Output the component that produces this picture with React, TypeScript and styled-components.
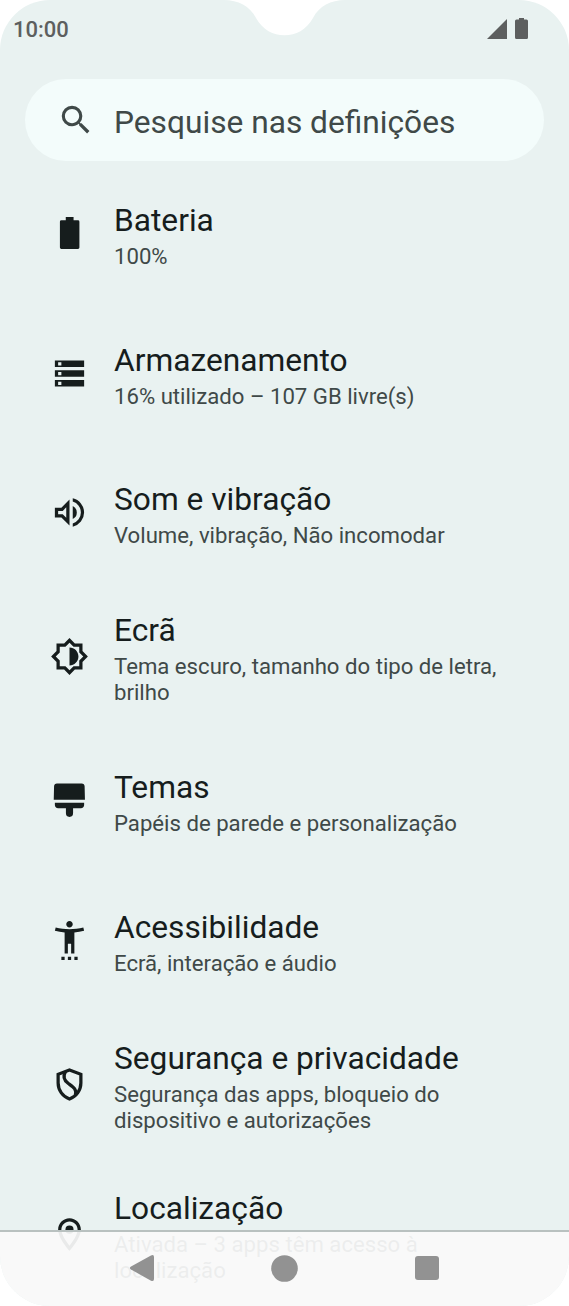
import React from 'react';
import styled, { createGlobalStyle } from 'styled-components';

const theme = {
  colors: {
    page: '#ffffff',
    screen: '#e9f2f1',
    search: '#f3fcfb',
    title: '#161d1d',
    text: '#3f4948',
    status: '#5d5f5f',
    nav: '#929292',
  },
  font: "Roboto, 'Liberation Sans', sans-serif",
};

const GlobalStyle = createGlobalStyle`
  * {
    box-sizing: border-box;
  }

  body {
    margin: 0;
    background: ${theme.colors.page};
    font-family: ${theme.font};
  }
`;

const Screen = styled.div`
  position: relative;
  width: 569px;
  height: 1306px;
  overflow: hidden;
  border-radius: 50px;
  background: ${theme.colors.screen};
`;

const Notch = styled.svg`
  position: absolute;
  top: 0;
  left: 224px;
`;

const StatusBar = styled.header`
  display: flex;
  align-items: center;
  justify-content: space-between;
  height: 59px;
  padding: 0 41px 0 13px;
  color: ${theme.colors.status};
`;

const Clock = styled.span`
  font-size: 22px;
  font-weight: 500;
  line-height: 26px;
`;

const StatusIcons = styled.div`
  display: flex;
  align-items: center;
  gap: 8px;
  padding-bottom: 2px;

  svg {
    display: block;
  }
`;

const SearchBar = styled.div`
  display: flex;
  align-items: center;
  height: 82px;
  margin: 20px 25px 0;
  padding-left: 32px;
  border-radius: 41px;
  background: ${theme.colors.search};
  color: ${theme.colors.text};
`;

const SearchIcon = styled.svg`
  width: 38px;
  height: 38px;
  margin: 0 19px 1px 0;
`;

const SearchText = styled.span`
  font-size: 31.7px;
  line-height: 38px;
  padding-top: 5px;
`;

const List = styled.main`
  padding-top: 3px;
`;

const Row = styled.section<{ $height: number }>`
  display: flex;
  align-items: center;
  height: ${({ $height }) => $height}px;
  padding: 0 50px;
`;

const RowIcon = styled.svg`
  flex: none;
  width: 39px;
  height: 39px;
  margin-right: 25px;
  color: ${theme.colors.title};
`;

const RowText = styled.div`
  padding-top: 1.2px;
`;

const RowTitle = styled.div`
  color: ${theme.colors.title};
  font-size: 31.7px;
  line-height: 44px;
`;

const RowSummary = styled.div`
  color: ${theme.colors.text};
  font-size: 22.17px;
  line-height: 26px;
  white-space: pre-line;
`;

const NavBar = styled.nav`
  position: absolute;
  bottom: 0;
  left: 0;
  display: flex;
  align-items: center;
  justify-content: space-between;
  width: 100%;
  height: 76px;
  padding: 0 130px 2px;
  border-top: 2px solid #b9c1c0;
  background: rgba(250, 250, 250, 0.93);
  background-clip: padding-box;
  color: ${theme.colors.nav};
`;

interface SettingItem {
  title: string;
  summary: string;
  height: number;
  icon: React.ReactNode;
}

const items: SettingItem[] = [
  {
    title: 'Bateria',
    summary: '100%',
    height: 139.4,
    icon: (
      <path d="M9.7 1.8h4.800v2.100h2.700q.9 0 .9.9v15.800q0 .9-.9.9H7q-.9 0-.9-.9V4.800q0-.9.9-.9h2.700z" />
    ),
  },
  {
    title: 'Armazenamento',
    summary: '16% utilizado – 107 GB livre(s)',
    height: 139.4,
    icon: (
      <path d="M3 20h18v-4H3v4zm2-3h2v2H5v-2zM3 4v4h18V4H3zm4 3H5V5h2v2zm-4 7h18v-4H3v4zm2-3h2v2H5v-2z" />
    ),
  },
  {
    title: 'Som e vibração',
    summary: 'Volume, vibração, Não incomodar',
    height: 139.4,
    icon: (
      <path d="M3 9v6h4l5 5V4L7 9H3zm7-.17v6.34L7.83 13H5v-2h2.83L10 8.83zM16.5 12A4.5 4.5 0 0 0 14 7.97v8.05A4.47 4.47 0 0 0 16.5 12zM14 3.23v2.06a7 7 0 0 1 0 13.42v2.06a9 9 0 0 0 0-17.54z" />
    ),
  },
  {
    title: 'Ecrã',
    summary: 'Tema escuro, tamanho do tipo de letra,\nbrilho',
    height: 148.8,
    icon: (
      <path d="M20 15.31L23.31 12 20 8.69V4h-4.69L12 .69 8.69 4H4v4.69L.69 12 4 15.31V20h4.69L12 23.31 15.31 20H20v-4.69zm-2-.83V18h-3.52L12 20.48 9.52 18H6v-3.52L3.52 12 6 9.52V6h3.52L12 3.52 14.48 6H18v3.52L20.48 12 18 14.48zM12 6.5v11c3.03 0 5.5-2.47 5.5-5.5S15.03 6.5 12 6.5z" />
    ),
  },
  {
    title: 'Temas',
    summary: 'Papéis de parede e personalização',
    height: 139.4,
    icon: (
      <path d="M4.300 1.500h15.200c1.100 0 1.800.7 1.800 1.800l.2 8.200H2.300l.2-8.200c0-1.100.7-1.800 1.800-1.800zM3 13.400h18v1.300c0 1.200-.8 2-2 2h-4.800v3.200a2.200 2.200 0 0 1-4.400 0v-3.200H5c-1.200 0-2-.8-2-2v-1.300z" />
    ),
  },
  {
    title: 'Acessibilidade',
    summary: 'Ecrã, interação e áudio',
    height: 139.4,
    icon: (
      <path d="M20.5 4c-2.61.7-5.67 1-8.5 1s-5.89-.3-8.5-1L3 6c1.86.5 4 .83 6 1v13h2v-6h2v6h2V7c2-.17 4.14-.5 6-1l-.5-2zM12 4c1.1 0 2-.9 2-2s-.9-2-2-2-2 .9-2 2 .9 2 2 2zM7 24h2v-2H7v2zm4 0h2v-2h-2v2zm4 0h2v-2h-2v2z" />
    ),
  },
  {
    title: 'Segurança e privacidade',
    summary: 'Segurança das apps, bloqueio do\ndispositivo e autorizações',
    height: 148.8,
    icon: (
      <g fill="none" stroke="currentColor" strokeWidth="2">
        <path d="M12 3.1l7 2.6v5.4c0 4.400-2.900 8.400-7 9.800-4.100-1.400-7-5.400-7-9.800V5.700l7-2.600z" />
        <path d="M9.600 4c-1.800 3-1.300 5.200 1.700 7.400 3.300 2.400 5.300 3.600 4.300 7.200" />
      </g>
    ),
  },
  {
    title: 'Localização',
    summary: 'Ativada – 3 apps têm acesso à\nlocalização',
    height: 151.8,
    icon: (
      <>
        <path d="M12 2C8.13 2 5 5.13 5 9c0 5.25 7 13 7 13s7-7.75 7-13c0-3.87-3.13-7-7-7zM7 9c0-2.76 2.24-5 5-5s5 2.24 5 5c0 2.88-2.88 7.19-5 9.88C9.92 16.21 7 11.85 7 9z" />
        <circle cx="12" cy="9" r="2.5" />
      </>
    ),
  },
];

const App: React.FC = () => {
  return (
    <>
      <GlobalStyle />
      <Screen>
        <StatusBar>
          <Clock>10:00</Clock>
          <StatusIcons>
            <svg width="20" height="20" viewBox="0 0 20 20" fill="currentColor">
              <path d="M0 20L20 0v20z" />
            </svg>
            <svg width="13" height="21" viewBox="0 0 13 21" fill="currentColor">
              <path d="M4 0h5v1.500h2.500Q13 1.500 13 3v16.500q0 1.500-1.500 1.500h-10Q0 21 0 19.500V3Q0 1.500 1.500 1.500H4z" />
            </svg>
          </StatusIcons>
        </StatusBar>
        <SearchBar>
          <SearchIcon viewBox="0 0 24 24" fill="currentColor">
            <path d="M15.500 14h-.79l-.28-.27A6.471 6.471 0 0 0 16 9.500 6.500 6.500 0 1 0 9.500 16c1.610 0 3.090-.59 4.230-1.570l.27.28v.79l5 4.990L20.490 19l-4.990-5zm-6 0C7.010 14 5 11.990 5 9.500S7.010 5 9.500 5 14 7.010 14 9.500 11.990 14 9.500 14z" />
          </SearchIcon>
          <SearchText>Pesquise nas definições</SearchText>
        </SearchBar>
        <List>
          {items.map((item) => (
            <Row key={item.title} $height={item.height}>
              <RowIcon viewBox="0 0 24 24" fill="currentColor" overflow="visible">
                {item.icon}
              </RowIcon>
              <RowText>
                <RowTitle>{item.title}</RowTitle>
                <RowSummary>{item.summary}</RowSummary>
              </RowText>
            </Row>
          ))}
        </List>
        <NavBar>
          <svg width="24" height="28" viewBox="1 0 24 28" fill="currentColor">
            <path d="M22 1.400L2 12.500q-2.200 1.500 0 3L22 26.700q3 1.200 3-1.700V3q0-2.900-3-1.600z" />
          </svg>
          <svg width="27" height="27" viewBox="0 0 27 27" fill="currentColor">
            <circle cx="13.500" cy="13.500" r="13.300" />
          </svg>
          <svg width="24" height="24" viewBox="0 0 24 24" fill="currentColor">
            <rect width="24" height="24" rx="3" />
          </svg>
        </NavBar>
        <Notch width="121" height="36" viewBox="0 0 121 36" fill={theme.colors.page}>
          <path d="M0 0C14 0 26 6 32 18C39 30 49 35.300 60.500 35.300S82 30 89 18C95 6 107 0 121 0z" />
        </Notch>
      </Screen>
    </>
  );
};

export default App;
